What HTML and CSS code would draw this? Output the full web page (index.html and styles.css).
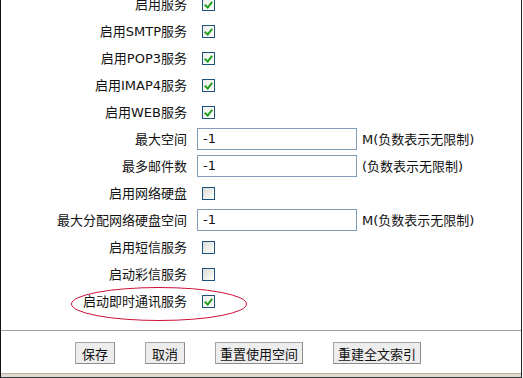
FILE: index.html
```html
<!DOCTYPE html>
<html lang="zh-CN">
<head>
    <meta charset="UTF-8">
    <title>服务设置</title>
    <link rel="stylesheet" href="styles.css">
</head>
<body>
    <div class="frame">
        <div class="form">
            <div class="row"><label class="name">启用服务</label><div class="value"><input type="checkbox" class="cb" checked></div></div>
            <div class="row"><label class="name">启用SMTP服务</label><div class="value"><input type="checkbox" class="cb" checked></div></div>
            <div class="row"><label class="name">启用POP3服务</label><div class="value"><input type="checkbox" class="cb" checked></div></div>
            <div class="row"><label class="name">启用IMAP4服务</label><div class="value"><input type="checkbox" class="cb" checked></div></div>
            <div class="row"><label class="name">启用WEB服务</label><div class="value"><input type="checkbox" class="cb" checked></div></div>
            <div class="row"><label class="name">最大空间</label><div class="value"><input type="text" class="txt" value="-1"><span class="note">M(负数表示无限制)</span></div></div>
            <div class="row"><label class="name">最多邮件数</label><div class="value"><input type="text" class="txt" value="-1"><span class="note">(负数表示无限制)</span></div></div>
            <div class="row"><label class="name">启用网络硬盘</label><div class="value"><input type="checkbox" class="cb"></div></div>
            <div class="row"><label class="name">最大分配网络硬盘空间</label><div class="value"><input type="text" class="txt" value="-1"><span class="note">M(负数表示无限制)</span></div></div>
            <div class="row"><label class="name">启用短信服务</label><div class="value"><input type="checkbox" class="cb"></div></div>
            <div class="row"><label class="name">启动彩信服务</label><div class="value"><input type="checkbox" class="cb"></div></div>
            <div class="row marked">
                <label class="name">启动即时通讯服务</label><div class="value"><input type="checkbox" class="cb" checked></div>
                <svg class="circle" width="178" height="36" viewBox="0 0 178 36"><ellipse cx="89" cy="18" rx="87.5" ry="16.5" fill="none" stroke="#d0103a" stroke-width="1"/></svg>
            </div>
        </div>
        <div class="actions">
            <button class="btn">保存</button>
            <button class="btn">取消</button>
            <button class="btn">重置使用空间</button>
            <button class="btn">重建全文索引</button>
        </div>
        <div class="statusbar"></div>
    </div>
</body>
</html>
```

FILE: styles.css
```css
body {
    margin: 0;
    background: #fff;
    font-family: "DejaVu Sans", "Noto Sans CJK SC", sans-serif;
    font-size: 13px;
    color: #111;
    overflow: hidden;
}
.frame {
    width: 520px;
    height: 378px;
    border-left: 1px solid #111;
    border-right: 1px solid #222;
    display: flex;
    flex-direction: column;
    overflow: hidden;
}
.form {
    margin-top: -10px;
}
.row {
    display: flex;
    align-items: center;
    height: 27px;
    position: relative;
}
.name {
    width: 186px;
    padding-right: 10px;
    text-align: right;
    white-space: nowrap;
}
.value {
    display: flex;
    align-items: center;
}
.cb {
    appearance: none;
    -webkit-appearance: none;
    width: 13px;
    height: 13px;
    margin: 1px 0 0 5px;
    border: 1px solid #1c5180;
    background: linear-gradient(135deg, #dcdcd7 0%, #f4f4f0 70%, #fff 100%);
    position: relative;
}
.cb:checked {
    background: linear-gradient(135deg, #eeeeea 0%, #fff 100%);
}
.cb:checked::after {
    content: "";
    position: absolute;
    left: 3px;
    top: 1px;
    width: 3px;
    height: 6px;
    border-right: 2px solid #21a121;
    border-bottom: 2px solid #21a121;
    transform: rotate(40deg);
}
.txt {
    width: 153px;
    height: 20px;
    margin: 0;
    padding: 0 0 0 5px;
    border: 1px solid #7f9db9;
    font-family: "DejaVu Sans", sans-serif;
    font-size: 13px;
    color: #111;
}
.note {
    margin-left: 5px;
    white-space: nowrap;
}
.circle {
    position: absolute;
    left: 69px;
    top: -1px;
}
.actions {
    margin-top: 16px;
    border-top: 1px solid #a0a0a0;
    padding: 11px 0 0 74px;
    display: flex;
    gap: 30px;
    flex: 1;
}
.btn {
    height: 22px;
    min-width: 40px;
    padding: 0 4px;
    border: 1px solid #a4a4a4;
    border-right-color: #8c8c8c;
    border-bottom-color: #8c8c8c;
    background: #ededed;
    font-family: "Noto Sans CJK SC", sans-serif;
    font-size: 13px;
    color: #111;
}
.statusbar {
    height: 3px;
    border-top: 1px solid #b8b4a0;
    border-bottom: 1px solid #404040;
    background: #dedad0;
}
```
